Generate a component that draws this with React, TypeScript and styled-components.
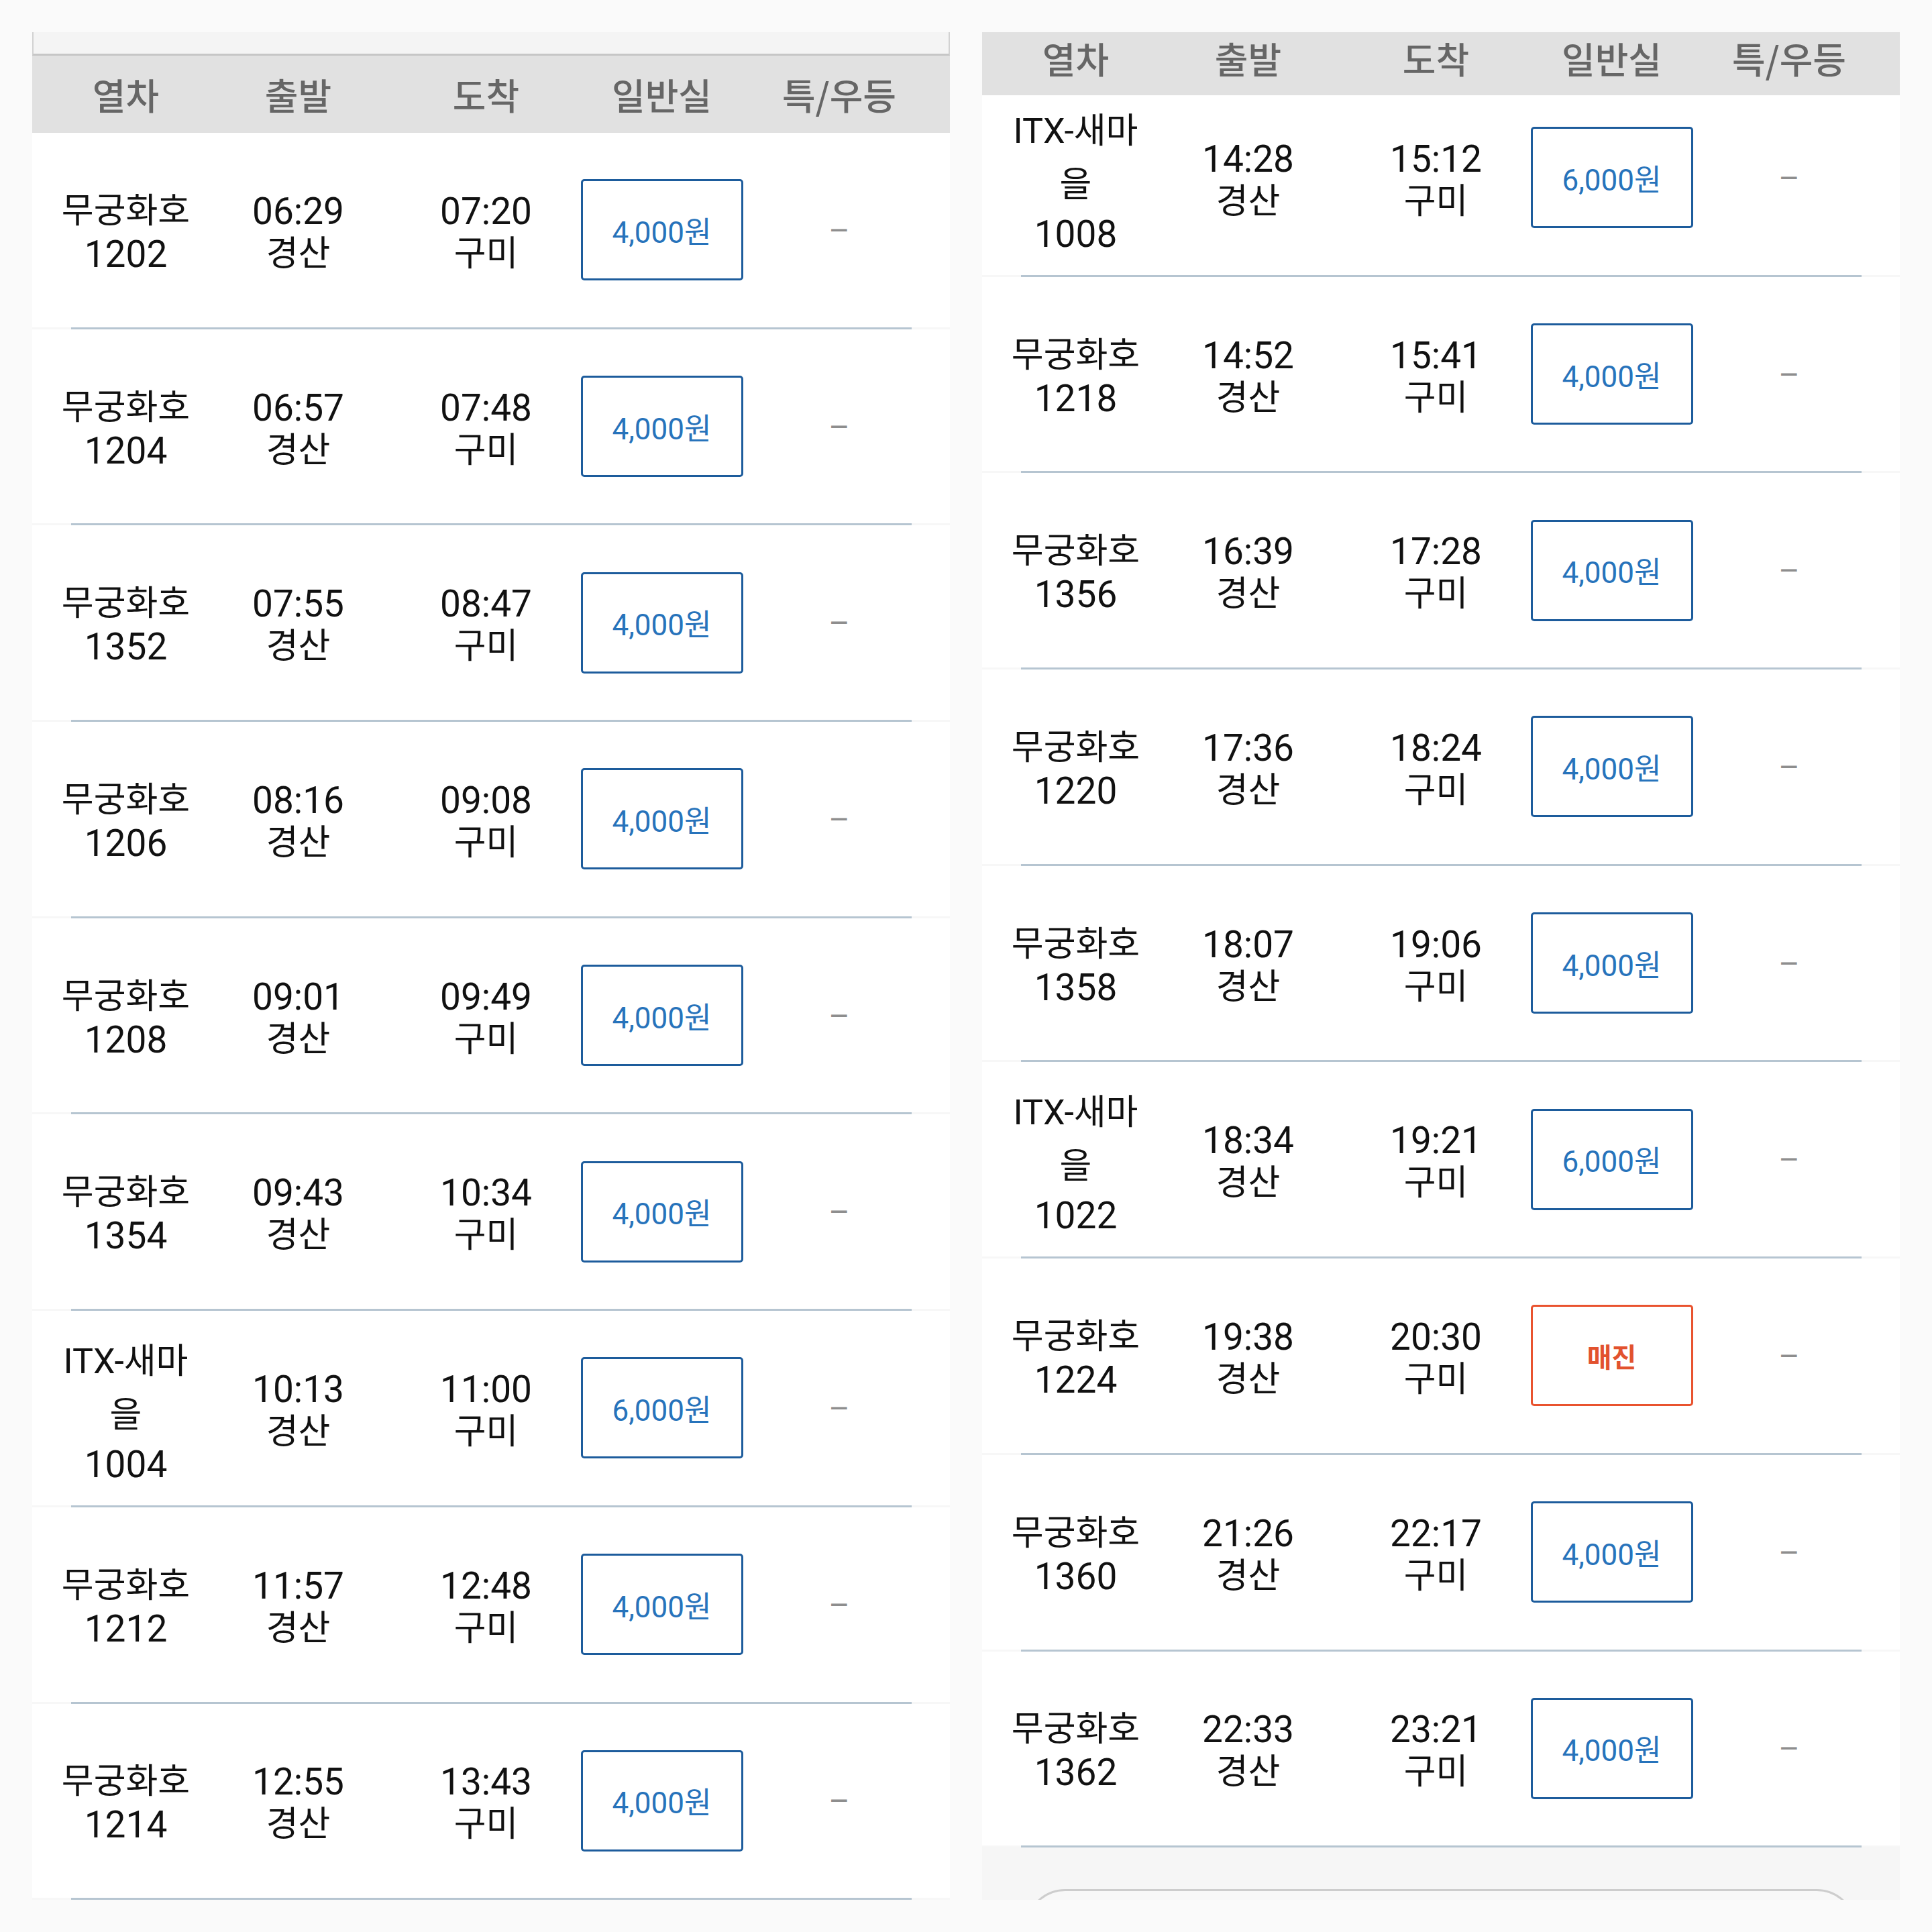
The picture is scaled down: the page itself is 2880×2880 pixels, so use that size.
import React from "react";
import styled, { createGlobalStyle } from "styled-components";

const GlobalStyle = createGlobalStyle`
  html, body {
    margin: 0;
    padding: 0;
    background: #fafafa;
  }
  body {
    font-family: Roboto, "Noto Sans CJK KR", sans-serif;
    color: #111;
  }
`;

type Train = {
  name: string;
  no: string;
  dep: string;
  arr: string;
  price: string | null;
};

const leftTrains: Train[] = [
  { name: "무궁화호", no: "1202", dep: "06:29", arr: "07:20", price: "4,000원" },
  { name: "무궁화호", no: "1204", dep: "06:57", arr: "07:48", price: "4,000원" },
  { name: "무궁화호", no: "1352", dep: "07:55", arr: "08:47", price: "4,000원" },
  { name: "무궁화호", no: "1206", dep: "08:16", arr: "09:08", price: "4,000원" },
  { name: "무궁화호", no: "1208", dep: "09:01", arr: "09:49", price: "4,000원" },
  { name: "무궁화호", no: "1354", dep: "09:43", arr: "10:34", price: "4,000원" },
  { name: "ITX-새마을", no: "1004", dep: "10:13", arr: "11:00", price: "6,000원" },
  { name: "무궁화호", no: "1212", dep: "11:57", arr: "12:48", price: "4,000원" },
  { name: "무궁화호", no: "1214", dep: "12:55", arr: "13:43", price: "4,000원" },
];

const rightTrains: Train[] = [
  { name: "ITX-새마을", no: "1008", dep: "14:28", arr: "15:12", price: "6,000원" },
  { name: "무궁화호", no: "1218", dep: "14:52", arr: "15:41", price: "4,000원" },
  { name: "무궁화호", no: "1356", dep: "16:39", arr: "17:28", price: "4,000원" },
  { name: "무궁화호", no: "1220", dep: "17:36", arr: "18:24", price: "4,000원" },
  { name: "무궁화호", no: "1358", dep: "18:07", arr: "19:06", price: "4,000원" },
  { name: "ITX-새마을", no: "1022", dep: "18:34", arr: "19:21", price: "6,000원" },
  { name: "무궁화호", no: "1224", dep: "19:38", arr: "20:30", price: null },
  { name: "무궁화호", no: "1360", dep: "21:26", arr: "22:17", price: "4,000원" },
  { name: "무궁화호", no: "1362", dep: "22:33", arr: "23:21", price: "4,000원" },
];

const COLUMNS = "279px 235px 325px 199px 330px";

const Page = styled.main`
  display: flex;
  gap: 48px;
  padding: 48px 48px 0;
  width: 2880px;
  height: 2880px;
  box-sizing: border-box;
  background: #fafafa;
  overflow: hidden;
`;

const Panel = styled.section`
  width: 1368px;
  height: 2784px;
  flex-shrink: 0;
  overflow: hidden;
  display: flex;
  flex-direction: column;
  background: #f6f6f6;
`;

const TopStub = styled.div`
  height: 32px;
  flex-shrink: 0;
  background: #f4f4f4;
  border-style: solid;
  border-color: #d2d2d2;
  border-width: 0 2px 3px 2px;
  border-bottom-color: #c6c6c6;
`;

const Header = styled.div<{ $compact?: boolean }>`
  position: relative;
  z-index: 1;
  display: grid;
  grid-template-columns: ${COLUMNS};
  align-items: center;
  box-sizing: border-box;
  height: ${(p) => (p.$compact ? 94 : 115)}px;
  padding-bottom: ${(p) => (p.$compact ? 16 : 0)}px;
  flex-shrink: 0;
  background: #e1e1e1;
`;

const HeaderCell = styled.div`
  text-align: center;
  font-family: "Noto Sans CJK KR", sans-serif;
  font-size: 54px;
  font-weight: 500;
  line-height: 64px;
  color: #666666;
`;

const List = styled.div<{ $under?: boolean }>`
  display: flex;
  flex-direction: column;
  flex-shrink: 0;
  margin-top: ${(p) => (p.$under ? "-22px" : "0")};
`;

const Row = styled.div`
  display: grid;
  grid-template-columns: ${COLUMNS};
  align-items: center;
  height: 289.7px;
  background: #ffffff;
`;

const Divider = styled.div`
  height: 3px;
  padding: 0 57px 0 58px;
  background: #f7f7f7;

  &::after {
    content: "";
    display: block;
    height: 3px;
    background: #b6c5d1;
  }
`;

const Cell = styled.div`
  display: flex;
  flex-direction: column;
  align-items: center;
  justify-content: center;
  min-width: 0;
  text-align: center;
`;

const TextCell = styled(Cell)`
  padding-top: 8px;
`;

const Line = styled.span<{ $num?: boolean; $lh?: number }>`
  display: block;
  max-width: 215px;
  font-size: ${(p) => (p.$num ? 55 : 52)}px;
  line-height: ${(p) => p.$lh ?? 64}px;
  color: #111;
`;

const PriceButton = styled.button<{ $soldOut?: boolean }>`
  flex-shrink: 0;
  width: 242px;
  height: 151px;
  box-sizing: border-box;
  border: 3.5px solid ${(p) => (p.$soldOut ? "#e9532f" : "#1d5c9c")};
  border-radius: 5px;
  background: #ffffff;
  color: ${(p) => (p.$soldOut ? "#e2522e" : "#2773bb")};
  font-family: Roboto, "Noto Sans CJK KR", sans-serif;
  font-size: ${(p) => (p.$soldOut ? 40 : 44)}px;
  font-weight: ${(p) => (p.$soldOut ? 700 : 400)};
  padding: 0;
  cursor: pointer;
`;

const Dash = styled.span`
  font-family: Roboto, sans-serif;
  font-size: 48px;
  line-height: 48px;
  color: #8e8e8e;
  padding-top: 2px;
`;

const Tail = styled.div`
  flex: 1;
  display: flex;
  flex-direction: column;
  padding: 62px 64px 0;
  background: #f6f6f6;
`;

const OutlineButton = styled.div`
  flex-shrink: 0;
  height: 120px;
  border: 3px solid #cdcdcd;
  border-radius: 60px;
  background: #f8f8f8;
`;

const headers = ["열차", "출발", "도착", "일반실", "특/우등"];

function TableHeader({ compact }: { compact?: boolean }) {
  return (
    <Header $compact={compact}>
      {headers.map((h) => (
        <HeaderCell key={h}>{h}</HeaderCell>
      ))}
    </Header>
  );
}

function TrainRow({ t }: { t: Train }) {
  const tall = t.name.length > 4;
  return (
    <>
      <Row>
        <TextCell>
          <Line $lh={tall ? 80 : 64}>{t.name}</Line>
          <Line $num $lh={tall ? 66 : 64}>
            {t.no}
          </Line>
        </TextCell>
        <TextCell>
          <Line $num>{t.dep}</Line>
          <Line>경산</Line>
        </TextCell>
        <TextCell>
          <Line $num>{t.arr}</Line>
          <Line>구미</Line>
        </TextCell>
        <Cell>
          {t.price ? (
            <PriceButton>{t.price}</PriceButton>
          ) : (
            <PriceButton $soldOut>매진</PriceButton>
          )}
        </Cell>
        <Cell>
          <Dash>–</Dash>
        </Cell>
      </Row>
      <Divider />
    </>
  );
}

export default function App() {
  return (
    <>
      <GlobalStyle />
      <Page>
        <Panel>
          <TopStub />
          <TableHeader />
          <List>
            {leftTrains.map((t) => (
              <TrainRow key={t.no} t={t} />
            ))}
          </List>
        </Panel>
        <Panel>
          <TableHeader compact />
          <List $under>
            {rightTrains.map((t) => (
              <TrainRow key={t.no} t={t} />
            ))}
          </List>
          <Tail>
            <OutlineButton />
          </Tail>
        </Panel>
      </Page>
    </>
  );
}
